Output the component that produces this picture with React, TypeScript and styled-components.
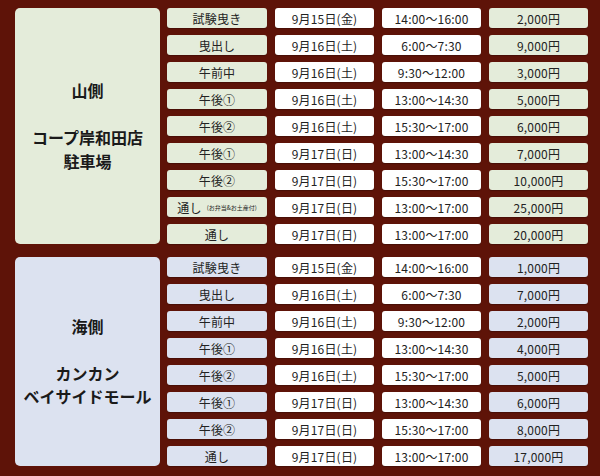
import { Fragment } from "react";
import styled, { createGlobalStyle } from "styled-components";

const GlobalStyle = createGlobalStyle`
  html, body {
    margin: 0;
    padding: 0;
    background: #5e1308;
  }
  body {
    font-family: "Noto Sans CJK JP", "Liberation Sans", sans-serif;
  }
`;

const Page = styled.div`
  width: 600px;
  height: 476px;
  box-sizing: border-box;
  padding: 8px 13px 0 15px;
  display: flex;
  flex-direction: column;
  gap: 13px;
  background: #5e1308;
  overflow: hidden;
`;

const Section = styled.div`
  display: grid;
  grid-template-columns: 144px 100px 99px 99px 99px;
  grid-auto-rows: 20px;
  column-gap: 8px;
  row-gap: 7px;
  & > :first-child {
    margin-right: -1px;
  }
`;

type Tone = "green" | "blue";

const tones: Record<Tone, string> = {
  green: "#e4ecda",
  blue: "#dce2f0",
};

const Place = styled.div<{ $tone: Tone; $rows: number }>`
  grid-row: 1 / span ${(p) => p.$rows};
  grid-column: 1;
  background: ${(p) => tones[p.$tone]};
  border-radius: 5px;
  display: flex;
  align-items: center;
  justify-content: center;
  font-family: "Noto Sans CJK JP", sans-serif;
  font-weight: 700;
  font-size: 16px;
  line-height: 23.5px;
  color: #1a1a1a;
  text-align: center;
`;

const Cell = styled.div<{ $tone?: Tone }>`
  background: ${(p) => (p.$tone ? tones[p.$tone] : "#ffffff")};
  border-radius: 3px;
  box-shadow: 0 1px 1px rgba(0, 0, 0, 0.25);
  display: flex;
  align-items: center;
  justify-content: center;
  font-size: 12px;
  color: #222;
  white-space: nowrap;
  letter-spacing: 0.2px;
`;

const Note = styled.span`
  font-size: 6px;
  margin-left: 5px;
  letter-spacing: 0;
`;

type Row = { label: string; note?: string; date: string; time: string; price: string };

const mountain: Row[] = [
  { label: "試験曳き", date: "9月15日(金)", time: "14:00〜16:00", price: "2,000円" },
  { label: "曳出し", date: "9月16日(土)", time: "6:00〜7:30", price: "9,000円" },
  { label: "午前中", date: "9月16日(土)", time: "9:30〜12:00", price: "3,000円" },
  { label: "午後①", date: "9月16日(土)", time: "13:00〜14:30", price: "5,000円" },
  { label: "午後②", date: "9月16日(土)", time: "15:30〜17:00", price: "6,000円" },
  { label: "午後①", date: "9月17日(日)", time: "13:00〜14:30", price: "7,000円" },
  { label: "午後②", date: "9月17日(日)", time: "15:30〜17:00", price: "10,000円" },
  { label: "通し", note: "(お弁当&お土産付)", date: "9月17日(日)", time: "13:00〜17:00", price: "25,000円" },
  { label: "通し", date: "9月17日(日)", time: "13:00〜17:00", price: "20,000円" },
];

const sea: Row[] = [
  { label: "試験曳き", date: "9月15日(金)", time: "14:00〜16:00", price: "1,000円" },
  { label: "曳出し", date: "9月16日(土)", time: "6:00〜7:30", price: "7,000円" },
  { label: "午前中", date: "9月16日(土)", time: "9:30〜12:00", price: "2,000円" },
  { label: "午後①", date: "9月16日(土)", time: "13:00〜14:30", price: "4,000円" },
  { label: "午後②", date: "9月16日(土)", time: "15:30〜17:00", price: "5,000円" },
  { label: "午後①", date: "9月17日(日)", time: "13:00〜14:30", price: "6,000円" },
  { label: "午後②", date: "9月17日(日)", time: "15:30〜17:00", price: "8,000円" },
  { label: "通し", date: "9月17日(日)", time: "13:00〜17:00", price: "17,000円" },
];

const Row = ({ tone, row }: { tone: Tone; row: Row }) => (
  <>
    <Cell $tone={tone}>
      {row.label}
      {row.note && <Note>{row.note}</Note>}
    </Cell>
    <Cell>{row.date}</Cell>
    <Cell>{row.time}</Cell>
    <Cell $tone={tone}>{row.price}</Cell>
  </>
);

const Schedule = ({ tone, lines, rows }: { tone: Tone; lines: string[]; rows: Row[] }) => (
  <Section>
    <Place $tone={tone} $rows={rows.length}>
      <div>
        {lines.map((l, i) => (
          <Fragment key={i}>
            {i > 0 && <br />}
            {l}
          </Fragment>
        ))}
      </div>
    </Place>
    {rows.map((r, i) => (
      <Row key={i} tone={tone} row={r} />
    ))}
  </Section>
);

export default function App() {
  return (
    <>
      <GlobalStyle />
      <Page>
        <Schedule tone="green" lines={["山側", "", "コープ岸和田店", "駐車場"]} rows={mountain} />
        <Schedule tone="blue" lines={["海側", "", "カンカン", "ベイサイドモール"]} rows={sea} />
      </Page>
    </>
  );
}
